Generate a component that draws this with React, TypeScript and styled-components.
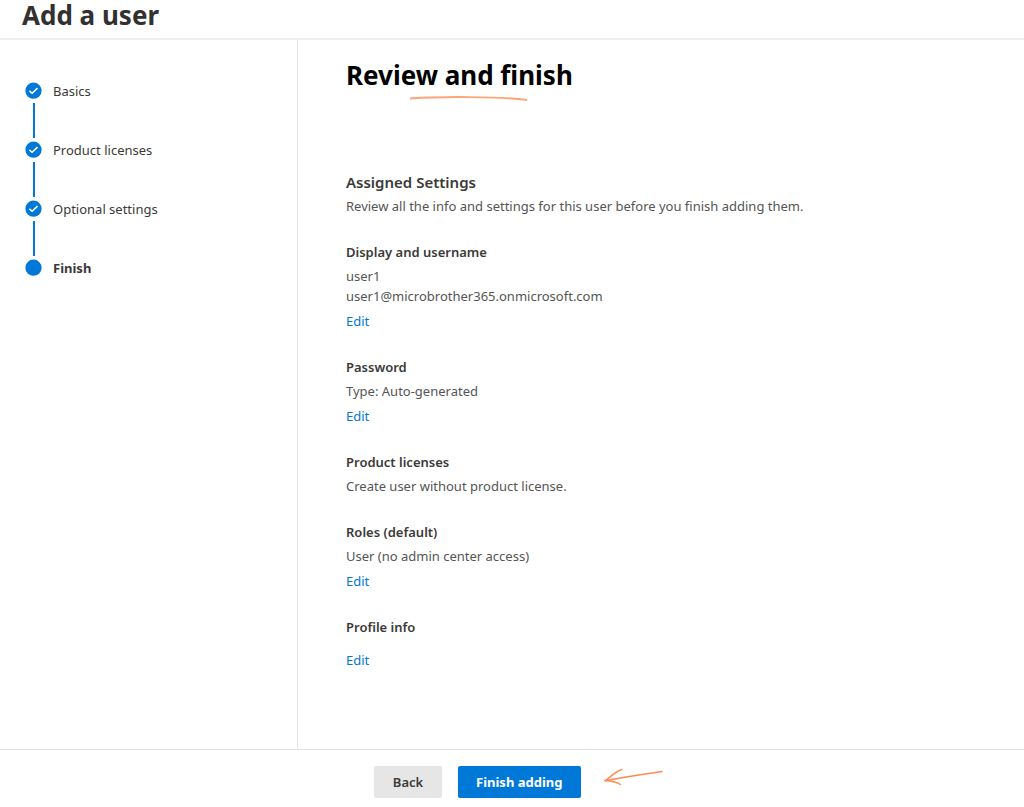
import React from 'react';
import styled, { createGlobalStyle } from 'styled-components';

const GlobalStyle = createGlobalStyle`
  * { box-sizing: border-box; }
  body {
    margin: 0;
    background: #fff;
    color: #3b3a39;
    font-family: "Segoe UI", "Noto Sans", "Open Sans", sans-serif;
    font-size: 13px;
    line-height: 20px;
  }
  h1, h2, h3, p, ol { margin: 0; padding: 0; }
`;

const Page = styled.div`
  display: flex;
  flex-direction: column;
  min-height: 100vh;
`;

const Header = styled.header`
  padding: 0 22px 8px;
  border-bottom: 2px solid #f0f0f0;
`;

const PageTitle = styled.h1`
  color: #323130;
  font-size: 26px;
  line-height: 30px;
  font-weight: 700;
`;

const Body = styled.div`
  display: flex;
  flex: 1;
`;

const Sidebar = styled.nav`
  flex: 0 0 298px;
  padding: 41px 24px;
  border-right: 1px solid #e6e6e6;
`;

const StepList = styled.ol`
  list-style: none;
`;

const Step = styled.li<{ $current?: boolean }>`
  display: grid;
  grid-template-columns: 19px 1fr;
  column-gap: 10px;
  font-weight: ${(p) => (p.$current ? 700 : 400)};
`;

const StepMarker = styled.svg`
  display: block;
  width: 20px;
  height: 20px;
`;

const Connector = styled.span`
  justify-self: center;
  width: 2px;
  height: 35px;
  margin: 2px 0;
  background: #0078d4;
`;

const Main = styled.main`
  flex: 1;
  min-width: 0;
  padding: 17px 48px;
`;

const TitleBlock = styled.div`
  margin-bottom: 70px;
`;

const MainTitle = styled.h2`
  color: #000;
  font-size: 26px;
  line-height: 36px;
  font-weight: 700;
`;

const Underline = styled.svg`
  display: block;
  width: 120px;
  height: 8px;
  margin: 1px 0 0 63px;
`;

const Intro = styled.section`
  display: grid;
  gap: 4px;
  margin-bottom: 26px;
  color: #555;
`;

const IntroTitle = styled.h3`
  color: #3b3a39;
  font-size: 15px;
  font-weight: 600;
`;

const Section = styled.section`
  margin-bottom: 26px;
`;

const SectionTitle = styled.h3`
  color: #3b3a39;
  font-size: 13px;
  font-weight: 600;
`;

const Details = styled.div`
  min-height: 4px;
  margin: 4px 0 5px;
  color: #555;
`;

const EditLink = styled.a`
  display: table;
  color: #0078d4;
  text-decoration: none;
`;

const Footer = styled.footer`
  display: flex;
  align-items: center;
  gap: 16px;
  padding: 16px 24px 9px 374px;
  border-top: 1px solid #e1e1e1;
`;

const Button = styled.button<{ $primary?: boolean }>`
  min-width: 68px;
  height: 32px;
  padding: 0 18px;
  border: 0;
  border-radius: 2px;
  background: ${(p) => (p.$primary ? '#0078d7' : '#e6e6e6')};
  color: ${(p) => (p.$primary ? '#fff' : '#3b3a39')};
  font: inherit;
  font-weight: ${(p) => (p.$primary ? 700 : 600)};
  white-space: nowrap;
`;

const Arrow = styled.svg`
  width: 64px;
  height: 24px;
  margin: -8px 0 0 6px;
`;

const steps = ['Basics', 'Product licenses', 'Optional settings', 'Finish'];

const sections: { title: string; lines: string[]; editable: boolean }[] = [
  { title: 'Display and username', lines: ['user1', 'user1@microbrother365.onmicrosoft.com'], editable: true },
  { title: 'Password', lines: ['Type: Auto-generated'], editable: true },
  { title: 'Product licenses', lines: ['Create user without product license.'], editable: false },
  { title: 'Roles (default)', lines: ['User (no admin center access)'], editable: true },
  { title: 'Profile info', lines: [], editable: true },
];

export default function App() {
  return (
    <Page>
      <GlobalStyle />
      <Header>
        <PageTitle>Add a user</PageTitle>
      </Header>
      <Body>
        <Sidebar aria-label="Progress">
          <StepList>
            {steps.map((label, i) => {
              const current = i === steps.length - 1;
              return (
                <Step key={label} $current={current} aria-current={current ? 'step' : undefined}>
                  <StepMarker viewBox="0 0 20 20" aria-hidden="true">
                    <circle cx="9.5" cy="9.7" r="8.1" fill="#0078d7" />
                    {!current && (
                      <path d="M5.4 9.9l2.700 2.400 5.400-5.200" fill="none" stroke="#fff" strokeWidth="1.5" />
                    )}
                  </StepMarker>
                  <span>{label}</span>
                  {!current && <Connector />}
                </Step>
              );
            })}
          </StepList>
        </Sidebar>
        <Main>
          <TitleBlock>
            <MainTitle>Review and finish</MainTitle>
            <Underline viewBox="0 0 120 8" aria-hidden="true">
              <path d="M1 4.600C30 2.400 90 2.400 118 6" fill="none" stroke="#ffa477" strokeWidth="2" />
            </Underline>
          </TitleBlock>
          <Intro>
            <IntroTitle>Assigned Settings</IntroTitle>
            <p>Review all the info and settings for this user before you finish adding them.</p>
          </Intro>
          {sections.map((s) => (
            <Section key={s.title}>
              <SectionTitle>{s.title}</SectionTitle>
              <Details>
                {s.lines.map((line) => (
                  <p key={line}>{line}</p>
                ))}
              </Details>
              {s.editable && (
                <EditLink href="#" aria-label={`Edit ${s.title}`}>
                  Edit
                </EditLink>
              )}
            </Section>
          ))}
        </Main>
      </Body>
      <Footer>
        <Button type="button">Back</Button>
        <Button type="button" $primary>
          Finish adding
        </Button>
        <Arrow viewBox="0 0 64 24" aria-hidden="true">
          <g fill="none" stroke="#ff8a50" strokeWidth="1.5" strokeLinecap="round">
            <path d="M59 5.500C42 8 22 11 2 14.700" />
            <path d="M19 3.500C13 5 8 10 3 14.500" />
            <path d="M2 14.500C8 15 14 16 17.500 18.500" />
          </g>
        </Arrow>
      </Footer>
    </Page>
  );
}
